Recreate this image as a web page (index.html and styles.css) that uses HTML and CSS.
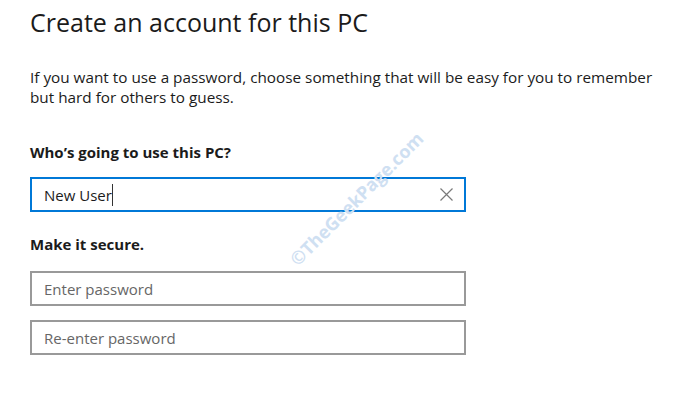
FILE: index.html
```html
<html>
<head>
    <title>Create an account for this PC</title>
<link rel="stylesheet" href="styles.css">
</head>
<body>

<div class="page">
  <h1>Create an account for this PC</h1>

  <p class="intro">If you want to use a password, choose something that will be easy for you to remember<br>
  but hard for others to guess.</p>

  <div class="label">Who&rsquo;s going to use this PC?</div>
  <div class="field active">
    <span class="value">New User</span><span class="caret"></span>
    <svg class="clear" width="13" height="13" viewBox="0 0 13 13">
      <path d="M0.5 0.5 L12.5 12.5 M12.5 0.5 L0.5 12.5" stroke="#7a7a7a" stroke-width="1.2" fill="none"/>
    </svg>
  </div>

  <div class="label second">Make it secure.</div>
  <div class="field"><span class="placeholder">Enter password</span></div>
  <div class="field"><span class="placeholder">Re-enter password</span></div>
</div>

<span class="watermark">&copy;TheGeekPage.com</span>

</body>
</html>
```

FILE: styles.css
```css
body {
    margin: 0;
    background-color: white;
    font-family: "Open Sans", "Noto Sans", sans-serif;
    color: #1b1b1b;
}

.page {
    padding-left: 30px;
    width: 436px;
}

h1 {
    font-size: 25px;
    font-weight: normal;
    line-height: 36px;
    margin: 0;
    padding-top: 4px;
    white-space: nowrap;
}

.intro {
    font-size: 15.3px;
    line-height: 20px;
    margin: 27px 0 0 0;
    white-space: nowrap;
}

.label {
    font-size: 15px;
    font-weight: bold;
    line-height: 20px;
    margin-top: 35px;
}

.label.second {
    margin-top: 22px;
}

.field {
    display: flex;
    align-items: center;
    box-sizing: border-box;
    height: 35px;
    margin-top: 14px;
    padding: 0 11px 0 12px;
    border: 2px solid #999999;
    font-size: 15px;
}

.field.active {
    border-color: #0078d7;
}

.label + .field {
    margin-top: 15px;
}

.label.second + .field {
    margin-top: 17px;
}

.value {
    color: #1b1b1b;
}

.caret {
    display: inline-block;
    width: 1px;
    height: 22px;
    background-color: #333333;
}

.clear {
    margin-left: auto;
}

.placeholder {
    color: #666666;
}

.watermark {
    position: absolute;
    left: 268px;
    top: 190px;
    width: 170px;
    text-align: center;
    font-size: 18px;
    font-weight: bold;
    color: #cfe0f2;
    transform: rotate(-45deg);
    white-space: nowrap;
}
```
